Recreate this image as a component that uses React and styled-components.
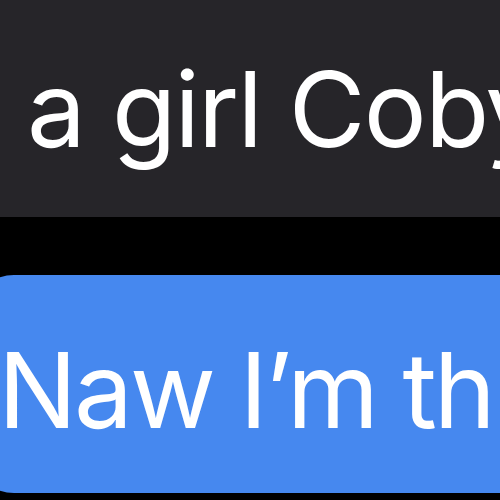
import React from "react";
import styled, { createGlobalStyle } from "styled-components";

const GlobalStyle = createGlobalStyle`
  html, body {
    margin: 0;
    padding: 0;
    background: #000;
    overflow: hidden;
  }
`;

const Thread = styled.div`
  width: 500px;
  height: 500px;
  display: flex;
  flex-direction: column;
  gap: 58px;
  overflow: hidden;
  background: #000;
`;

const Bubble = styled.div`
  flex: none;
  display: flex;
  align-items: center;
  white-space: nowrap;
  font-family: Inter, "Liberation Sans", sans-serif;
  font-size: 105px;
  letter-spacing: ${(p) => p.$track}px;
  color: #fff;
  background: ${(p) => (p.$sent ? "#4688ef" : "#262529")};
  height: ${(p) => p.$height}px;
  margin-left: ${(p) => p.$shift}px;
  padding-left: ${(p) => p.$pad}px;
  border-radius: ${(p) => (p.$sent ? "44px 0 0 44px" : "0")};
  width: 700px;
`;

const Words = styled.span`
  display: block;
  line-height: 1;
  transform: translateY(${(p) => p.$dy}px);
`;

export default function App() {
  return (
    <>
      <GlobalStyle />
      <Thread>
        <Bubble $height={217} $shift={0} $pad={27} $track={-1.8}>
          <Words $dy={0}>a girl Coby</Words>
        </Bubble>
        <Bubble $sent $height={218} $shift={-30} $pad={28} $track={-3}>
          <Words $dy={5}>Naw I’m th</Words>
        </Bubble>
      </Thread>
    </>
  );
}
